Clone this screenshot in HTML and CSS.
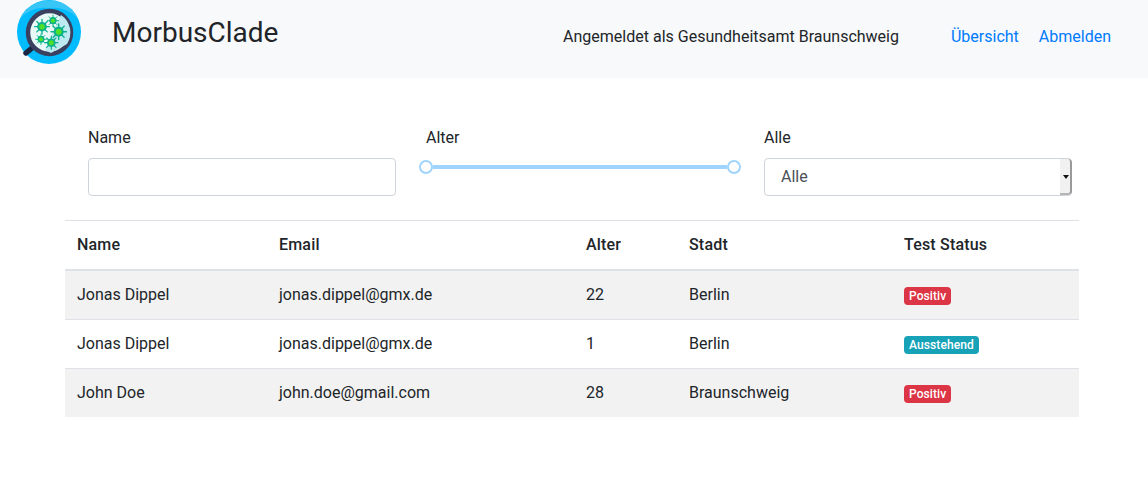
FILE: index.html
```html
<!DOCTYPE html>
<html lang="de">
<head>
	<meta charset="UTF-8">
	<title>MorbusClade</title>
	<link rel="stylesheet" href="styles.css">
</head>
<body>
	<nav class="navbar">
		<svg class="logo" viewBox="0 0 64 64" width="64" height="64">
			<defs>
				<g id="germ">
					<g stroke="#08b08c" stroke-width="1.3" stroke-linecap="round">
						<path d="M0 -7.4V7.4M-7.4 0H7.4M-5.2 -5.2L5.2 5.2M-5.2 5.2L5.2 -5.2"/>
					</g>
					<circle r="4.8" fill="#08b08c"/>
					<circle r="2.8" fill="#4fe02c"/>
				</g>
			</defs>
			<circle cx="32" cy="32" r="32" fill="#00bcff"/>
			<path d="M3 19A32 32 0 0 1 61 19A32 32 0 0 0 32 8A32 32 0 0 0 3 19Z" fill="#38c6f7"/>
			<path d="M15 48L9 53" stroke="#1c2540" stroke-width="5.5" stroke-linecap="round"/>
			<circle cx="32.5" cy="32.5" r="21.5" fill="#e8f9f8" stroke="#3a4160" stroke-width="4.5"/>
			<path d="M44 15A21 21 0 0 1 50 44L34 53L28 50Z" fill="#bde9f0"/>
			<use href="#germ" transform="translate(25 26.7)"/>
			<use href="#germ" transform="translate(36 20.7) scale(.75)"/>
			<use href="#germ" transform="translate(41.7 31.7) scale(1.05)"/>
			<use href="#germ" transform="translate(24 39.3) scale(.72)"/>
			<use href="#germ" transform="translate(34.3 42.7) scale(.9)"/>
		</svg>
		<a class="brand">MorbusClade</a>
		<span class="user">Angemeldet als Gesundheitsamt Braunschweig</span>
		<a class="nav-link first" href="#">Übersicht</a>
		<a class="nav-link" href="#">Abmelden</a>
	</nav>

	<div class="container">
		<div class="filters">
			<div class="filter">
				<label>Name</label>
				<input class="form-control" type="text">
			</div>
			<div class="filter">
				<label>Alter</label>
				<div class="slider">
					<span class="handle"></span>
					<span class="track"></span>
					<span class="handle"></span>
				</div>
			</div>
			<div class="filter">
				<label>Alle</label>
				<div class="select-wrap">
					<select class="form-control select">
						<option>Alle</option>
					</select>
					<span class="select-btn"></span>
				</div>
			</div>
		</div>

		<table class="table">
			<thead>
				<tr>
					<th class="c-name">Name</th>
					<th class="c-email">Email</th>
					<th class="c-age">Alter</th>
					<th class="c-city">Stadt</th>
					<th>Test Status</th>
				</tr>
			</thead>
			<tbody>
				<tr>
					<td>Jonas Dippel</td>
					<td>jonas.dippel@gmx.de</td>
					<td>22</td>
					<td>Berlin</td>
					<td><span class="badge danger">Positiv</span></td>
				</tr>
				<tr>
					<td>Jonas Dippel</td>
					<td>jonas.dippel@gmx.de</td>
					<td>1</td>
					<td>Berlin</td>
					<td><span class="badge info">Ausstehend</span></td>
				</tr>
				<tr>
					<td>John Doe</td>
					<td>john.doe@gmail.com</td>
					<td>28</td>
					<td>Braunschweig</td>
					<td><span class="badge danger">Positiv</span></td>
				</tr>
			</tbody>
		</table>
	</div>
</body>
</html>
```

FILE: styles.css
```css
body{
	margin: 0;
	font-family: Roboto, sans-serif;
	font-size: 16px;
	line-height: 1.5;
	color: #212529;
	background: #fff;
}
.navbar{
	display: flex;
	height: 78px;
	background: #f8f9fa;
	padding-left: 17px;
	padding-right: 37px;
	box-sizing: border-box;
}
.logo{
	flex: none;
}
.brand{
	margin-left: 31px;
	margin-top: 12px;
	font-size: 28px;
	line-height: 42px;
}
.user{
	margin-left: auto;
	margin-top: 25px;
}
.nav-link{
	margin-top: 25px;
	margin-left: 20px;
	color: #007bff;
	text-decoration: none;
}
.nav-link.first{
	margin-left: 52px;
}
.container{
	width: 1014px;
	margin-left: 65px;
}
.filters{
	display: grid;
	grid-template-columns: repeat(3, 308px);
	column-gap: 30px;
	padding: 48px 0 24px 23px;
}
.filter label{
	display: block;
	margin-bottom: 8px;
}
.form-control{
	display: block;
	width: 100%;
	height: 38px;
	box-sizing: border-box;
	border: 1px solid #ced4da;
	border-radius: 4px;
	background: #fff;
	font-family: inherit;
	font-size: 16px;
	color: #495057;
	padding: 6px 12px;
}
.select-wrap{
	position: relative;
}
.select{
	appearance: none;
	padding: 4px 12px 6px 16px;
}
.select-btn{
	position: absolute;
	top: 1px;
	right: 0;
	width: 12px;
	height: 36px;
	box-sizing: border-box;
	background: #f1f1f1;
	border-right: 2px solid #9a9a9a;
	border-bottom: 2px solid #b5b5b5;
	border-radius: 0 4px 4px 0;
}
.select-btn::after{
	content: "";
	position: absolute;
	left: 3px;
	top: 16px;
	border-top: 4px solid #111;
	border-left: 3px solid transparent;
	border-right: 3px solid transparent;
}
.slider{
	display: flex;
	align-items: center;
	margin-left: -7px;
	padding-top: 2px;
	width: 322px;
}
.handle{
	flex: none;
	width: 14px;
	height: 14px;
	box-sizing: border-box;
	border: 2px solid #9fd4fd;
	border-radius: 50%;
	background: #fff;
}
.track{
	flex: 1;
	height: 4px;
	background: #9fd4fd;
}
.table{
	width: 1014px;
	table-layout: fixed;
	border-collapse: collapse;
}
.table th,
.table td{
	padding: 12px;
	text-align: left;
	vertical-align: top;
	border-top: 1px solid #dee2e6;
}
.table th{
	font-weight: 500;
	letter-spacing: .18px;
	vertical-align: bottom;
	border-bottom: 2px solid #dee2e6;
}
.table tbody tr:nth-child(odd){
	background: #f2f2f2;
}
.c-name{
	width: 178px;
}
.c-email{
	width: 283px;
}
.c-age{
	width: 79px;
}
.c-city{
	width: 191px;
}
.badge{
	display: inline-block;
	padding: 3px 5px;
	font-size: 12px;
	font-weight: 500;
	letter-spacing: .1px;
	line-height: 12px;
	color: #fff;
	border-radius: 4px;
	vertical-align: baseline;
}
.danger{
	background: #dc3545;
}
.info{
	background: #17a2b8;
}
```
